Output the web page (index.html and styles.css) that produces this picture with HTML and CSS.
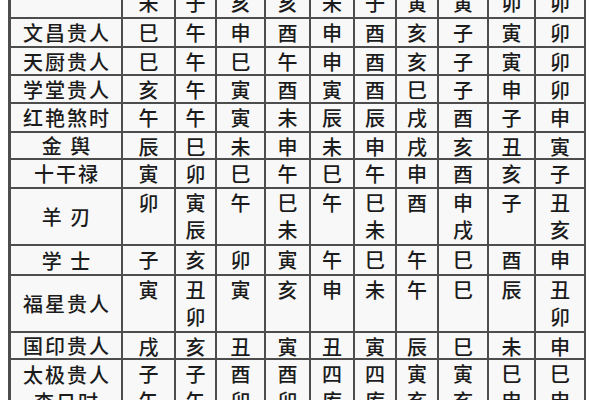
FILE: index.html
```html
<!DOCTYPE html>
<html lang="zh-CN">
<head>
<meta charset="utf-8">
<title>神煞查表</title>
<link rel="stylesheet" href="styles.css">
</head>
<body>
<div class="sheet">
  <div class="lbl">天乙贵人</div>
  <div class="v">丑<br>未</div><div class="v">申<br>子</div><div class="v">酉<br>亥</div><div class="v">酉<br>亥</div><div class="v">丑<br>未</div><div class="v">申<br>子</div><div class="v">午<br>寅</div><div class="v">午<br>寅</div><div class="v">巳<br>卯</div><div class="v">巳<br>卯</div>

  <div class="lbl">文昌贵人</div>
  <div class="v">巳</div><div class="v">午</div><div class="v">申</div><div class="v">酉</div><div class="v">申</div><div class="v">酉</div><div class="v">亥</div><div class="v">子</div><div class="v">寅</div><div class="v">卯</div>

  <div class="lbl">天厨贵人</div>
  <div class="v">巳</div><div class="v">午</div><div class="v">巳</div><div class="v">午</div><div class="v">申</div><div class="v">酉</div><div class="v">亥</div><div class="v">子</div><div class="v">寅</div><div class="v">卯</div>

  <div class="lbl">学堂贵人</div>
  <div class="v">亥</div><div class="v">午</div><div class="v">寅</div><div class="v">酉</div><div class="v">寅</div><div class="v">酉</div><div class="v">巳</div><div class="v">子</div><div class="v">申</div><div class="v">卯</div>

  <div class="lbl">红艳煞时</div>
  <div class="v">午</div><div class="v">午</div><div class="v">寅</div><div class="v">未</div><div class="v">辰</div><div class="v">辰</div><div class="v">戌</div><div class="v">酉</div><div class="v">子</div><div class="v">申</div>

  <div class="lbl">金 舆</div>
  <div class="v">辰</div><div class="v">巳</div><div class="v">未</div><div class="v">申</div><div class="v">未</div><div class="v">申</div><div class="v">戌</div><div class="v">亥</div><div class="v">丑</div><div class="v">寅</div>

  <div class="lbl">十干禄</div>
  <div class="v">寅</div><div class="v">卯</div><div class="v">巳</div><div class="v">午</div><div class="v">巳</div><div class="v">午</div><div class="v">申</div><div class="v">酉</div><div class="v">亥</div><div class="v">子</div>

  <div class="lbl">羊 刃</div>
  <div class="v">卯</div><div class="v">寅<br>辰</div><div class="v">午</div><div class="v">巳<br>未</div><div class="v">午</div><div class="v">巳<br>未</div><div class="v">酉</div><div class="v">申<br>戌</div><div class="v">子</div><div class="v">丑<br>亥</div>

  <div class="lbl">学 士</div>
  <div class="v">子</div><div class="v">亥</div><div class="v">卯</div><div class="v">寅</div><div class="v">午</div><div class="v">巳</div><div class="v">午</div><div class="v">巳</div><div class="v">酉</div><div class="v">申</div>

  <div class="lbl">福星贵人</div>
  <div class="v">寅</div><div class="v">丑<br>卯</div><div class="v">寅</div><div class="v">亥</div><div class="v">申</div><div class="v">未</div><div class="v">午</div><div class="v">巳</div><div class="v">辰</div><div class="v">丑<br>卯</div>

  <div class="lbl">国印贵人</div>
  <div class="v">戌</div><div class="v">亥</div><div class="v">丑</div><div class="v">寅</div><div class="v">丑</div><div class="v">寅</div><div class="v">辰</div><div class="v">巳</div><div class="v">未</div><div class="v">申</div>

  <div class="lbl">太极贵人<br>查日时</div>
  <div class="v">子<br>午</div><div class="v">子<br>午</div><div class="v">酉<br>卯</div><div class="v">酉<br>卯</div><div class="v">四<br>库</div><div class="v">四<br>库</div><div class="v">寅<br>亥</div><div class="v">寅<br>亥</div><div class="v">巳<br>申</div><div class="v">巳<br>申</div>
</div>
</body>
</html>
```
FILE: styles.css
```css
html, body {
  margin: 0;
  padding: 0;
  background: #ffffff;
  overflow: hidden;
}

body {
  font-family: "Noto Sans CJK SC", "Noto Sans", sans-serif;
  color: #1c1c1c;
}

.sheet {
  display: grid;
  width: max-content;
  margin: -40px 0 0 8px;
  padding: 2px 2px 2px 3px;
  gap: 2px;
  background: #4d4d4d;
  grid-template-columns: 110px 51px 39px 47px 43px 42px 40px 40px 48px 45px 48px;
  grid-template-rows: 55px 27px 26px 26px 27px 25px 27px 55px 28px 55px 25px 55px;
}

.lbl, .v {
  background: #f8f8f8;
  font-size: 20px;
  font-weight: 500;
  line-height: 27px;
  text-align: center;
}

.lbl {
  display: flex;
  align-items: center;
  justify-content: center;
  letter-spacing: 2px;
  padding-left: 2px;
}

.v {
  padding-top: 0;
}
```
